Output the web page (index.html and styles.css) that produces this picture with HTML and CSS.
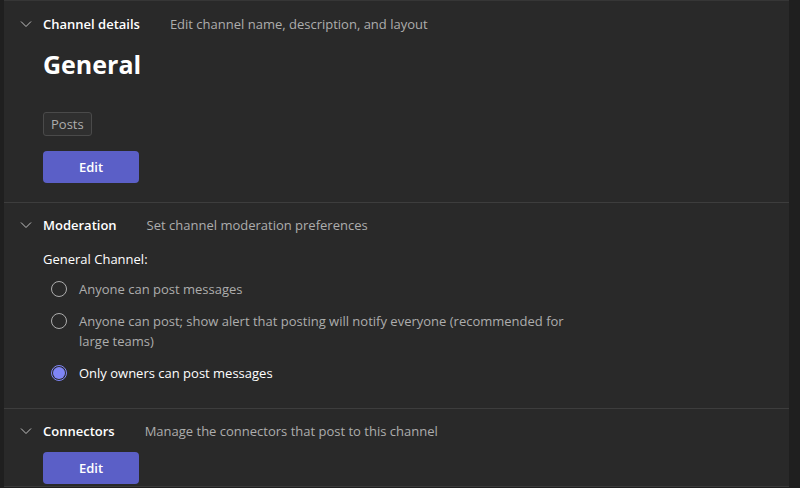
FILE: index.html
```html
<!DOCTYPE html>
<html lang="en">
<head>
    <meta charset="UTF-8">
    <meta name="viewport" content="width=device-width, initial-scale=1.0">
    <title>Channel settings</title>
    <link rel="stylesheet" href="styles.css">
</head>
<body>
    <main class="panel">
        <section class="setting">
            <div class="setting-head">
                <svg class="chevron" viewBox="0 0 12 12"><path d="M1 3.5 L6 8.5 L11 3.5"/></svg>
                <span class="setting-title">Channel details</span>
                <span class="setting-desc">Edit channel name, description, and layout</span>
            </div>
            <div class="setting-body">
                <h1 class="channel-name">General</h1>
                <span class="chip">Posts</span>
                <button class="primary-btn">Edit</button>
            </div>
        </section>

        <section class="setting moderation">
            <div class="setting-head">
                <svg class="chevron" viewBox="0 0 12 12"><path d="M1 3.5 L6 8.5 L11 3.5"/></svg>
                <span class="setting-title">Moderation</span>
                <span class="setting-desc">Set channel moderation preferences</span>
            </div>
            <div class="setting-body">
                <p class="group-label">General Channel:</p>
                <div class="radio-list">
                    <label class="radio">
                        <span class="radio-dot"></span>
                        <span class="radio-text">Anyone can post messages</span>
                    </label>
                    <label class="radio">
                        <span class="radio-dot"></span>
                        <span class="radio-text">Anyone can post; show alert that posting will notify everyone (recommended for large teams)</span>
                    </label>
                    <label class="radio checked">
                        <span class="radio-dot"></span>
                        <span class="radio-text">Only owners can post messages</span>
                    </label>
                </div>
            </div>
        </section>

        <section class="setting">
            <div class="setting-head">
                <svg class="chevron" viewBox="0 0 12 12"><path d="M1 3.5 L6 8.5 L11 3.5"/></svg>
                <span class="setting-title">Connectors</span>
                <span class="setting-desc">Manage the connectors that post to this channel</span>
            </div>
            <div class="setting-body tight">
                <button class="primary-btn">Edit</button>
            </div>
        </section>
    </main>
</body>
</html>
```

FILE: styles.css
```css
:root {
    --bg: #292929;
    --edge: #1f1f1f;
    --line: #3d3d3d;
    --text: #ffffff;
    --muted: #adadad;
    --brand: #5b5fc7;
    --brand-light: #7f85f5;
}

* {
    margin: 0;
    padding: 0;
    box-sizing: border-box;
}

body {
    background: var(--edge);
    color: var(--text);
    font-family: 'Open Sans', 'Noto Sans', sans-serif;
    font-size: 13px;
    line-height: 20px;
    overflow: hidden;
}

.panel {
    margin-left: 4px;
    width: 785px;
    height: 487px;
    background: var(--bg);
    border-top: 1px solid #363636;
    border-bottom: 1px solid #3a3a3a;
    overflow: hidden;
}

.setting {
    padding: 12px 0 19px;
    border-bottom: 1px solid var(--line);
}

.setting:first-child {
    padding-top: 13px;
}

.setting.moderation {
    padding-bottom: 25px;
}

.setting:last-child {
    border-bottom: none;
}

.setting-head {
    display: flex;
    align-items: center;
    height: 20px;
    padding-left: 16px;
}

.chevron {
    width: 12px;
    height: 12px;
    fill: none;
    stroke: #d0d0d0;
    stroke-width: 0.9;
    margin-right: 11px;
}

.setting-title {
    font-weight: 600;
    margin-right: 30px;
}

.setting-desc {
    color: var(--muted);
}

.setting-body {
    padding-left: 39px;
    display: flex;
    flex-direction: column;
    align-items: flex-start;
}

.channel-name {
    font-size: 25px;
    font-weight: 700;
    line-height: 36px;
    margin-top: 12px;
}

.chip {
    margin-top: 30px;
    height: 24px;
    padding: 0 7px;
    line-height: 22px;
    border: 1px solid #4a4a4a;
    border-radius: 3px;
    background: #2f2f2f;
    color: var(--muted);
}

.primary-btn {
    margin-top: 15px;
    width: 96px;
    height: 32px;
    border: none;
    border-radius: 4px;
    background: var(--brand);
    color: var(--text);
    font-family: inherit;
    font-size: 13px;
    font-weight: 600;
}

.tight .primary-btn {
    margin-top: 11px;
}

.group-label {
    margin-top: 14px;
}

.radio-list {
    display: flex;
    flex-direction: column;
    gap: 12px;
    margin-top: 10px;
}

.radio {
    display: flex;
    align-items: flex-start;
    padding-left: 8px;
}

.radio-dot {
    flex: none;
    width: 16px;
    height: 16px;
    margin-top: 2px;
    margin-right: 12px;
    border: 1px solid #adadad;
    border-radius: 50%;
    display: flex;
    align-items: center;
    justify-content: center;
}

.radio-text {
    color: var(--muted);
    max-width: 510px;
}

.radio.checked .radio-dot {
    border-color: var(--brand-light);
}

.radio.checked .radio-dot::after {
    content: '';
    width: 12px;
    height: 12px;
    border-radius: 50%;
    background: var(--brand-light);
}

.radio.checked .radio-text {
    color: var(--text);
}
```
